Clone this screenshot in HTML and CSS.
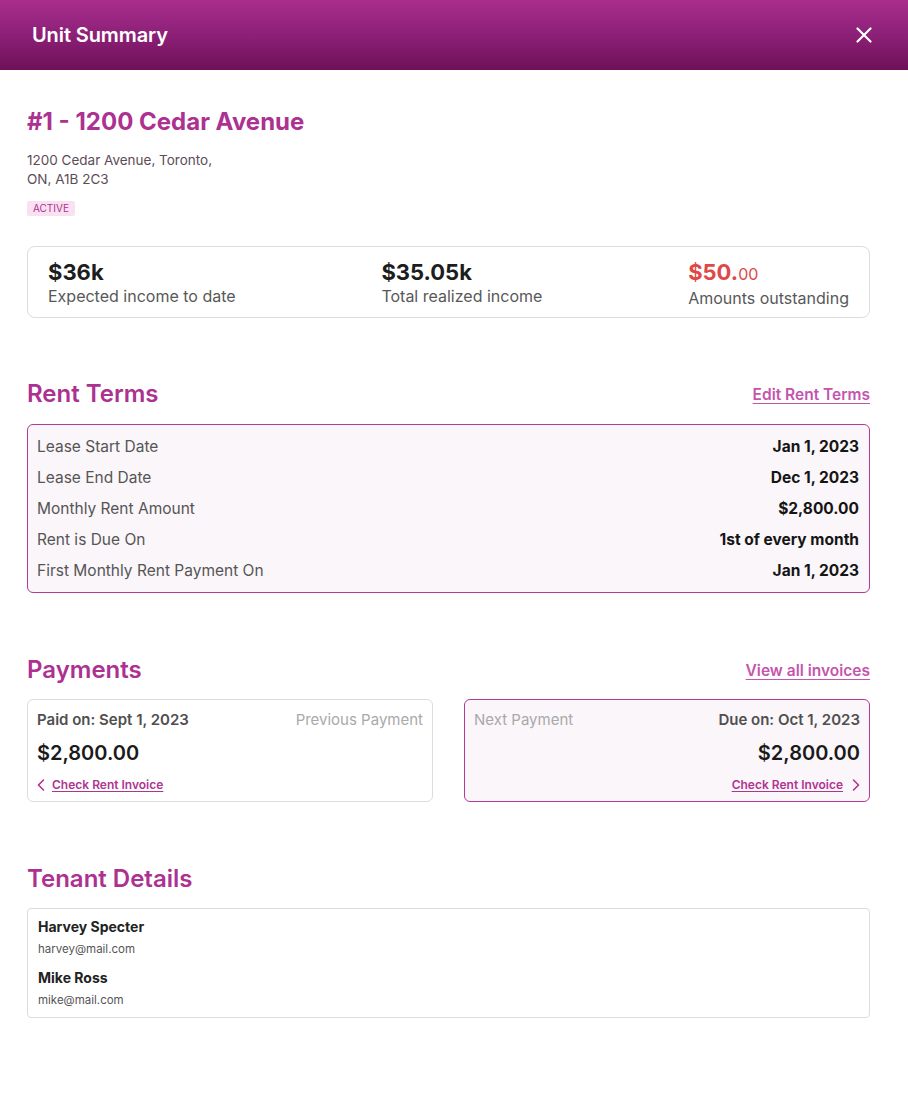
FILE: index.html
```html
<!DOCTYPE html>
<html lang="en">
<head>
<meta charset="utf-8">
<title>Unit Summary</title>
<link rel="stylesheet" href="styles.css">
</head>
<body>
<div class="modal">
  <header class="modal-header">
    <h1 class="modal-title">Unit Summary</h1>
    <button class="close-btn" aria-label="Close">
      <svg width="16" height="16" viewBox="0 0 16 16"><path d="M1.5 1.5 L14.5 14.5 M14.5 1.5 L1.5 14.5" stroke="#fff" stroke-width="2.2" stroke-linecap="round"/></svg>
    </button>
  </header>

  <main class="content">
    <section class="unit-info">
      <h2 class="unit-name">#1 - 1200 Cedar Avenue</h2>
      <p class="address">1200 Cedar Avenue, Toronto,<br>ON, A1B 2C3</p>
      <span class="badge">ACTIVE</span>
    </section>

    <section class="stats">
      <div class="stat">
        <div class="stat-value">$36k</div>
        <div class="stat-label">Expected income to date</div>
      </div>
      <div class="stat">
        <div class="stat-value">$35.05k</div>
        <div class="stat-label">Total realized income</div>
      </div>
      <div class="stat">
        <div class="stat-value red">$50.<span class="cents">00</span></div>
        <div class="stat-label">Amounts outstanding</div>
      </div>
    </section>

    <section class="section rent-section">
      <div class="section-head">
        <h3 class="section-title">Rent Terms</h3>
        <a class="section-link" href="#">Edit Rent Terms</a>
      </div>
      <div class="terms">
        <div class="term"><span class="term-label">Lease Start Date</span><span class="term-value">Jan 1, 2023</span></div>
        <div class="term"><span class="term-label">Lease End Date</span><span class="term-value">Dec 1, 2023</span></div>
        <div class="term"><span class="term-label">Monthly Rent Amount</span><span class="term-value">$2,800.00</span></div>
        <div class="term"><span class="term-label">Rent is Due On</span><span class="term-value">1st of every month</span></div>
        <div class="term"><span class="term-label">First Monthly Rent Payment On</span><span class="term-value">Jan 1, 2023</span></div>
      </div>
    </section>

    <section class="section pay-section">
      <div class="section-head">
        <h3 class="section-title">Payments</h3>
        <a class="section-link" href="#">View all invoices</a>
      </div>
      <div class="pay-grid">
        <div class="pay-card">
          <div class="pay-top">
            <span class="pay-date">Paid on: Sept 1, 2023</span>
            <span class="pay-kind">Previous Payment</span>
          </div>
          <div class="pay-amount">$2,800.00</div>
          <a class="invoice-link" href="#">
            <svg width="8" height="12" viewBox="0 0 8 12"><path d="M6.5 1 L1.5 6 L6.5 11" fill="none" stroke="#b0348f" stroke-width="1.6" stroke-linecap="round" stroke-linejoin="round"/></svg>
            <span>Check Rent Invoice</span>
          </a>
        </div>
        <div class="pay-card next">
          <div class="pay-top">
            <span class="pay-kind">Next Payment</span>
            <span class="pay-date">Due on: Oct 1, 2023</span>
          </div>
          <div class="pay-amount right">$2,800.00</div>
          <a class="invoice-link right" href="#">
            <span>Check Rent Invoice</span>
            <svg width="8" height="12" viewBox="0 0 8 12"><path d="M1.5 1 L6.5 6 L1.5 11" fill="none" stroke="#b0348f" stroke-width="1.6" stroke-linecap="round" stroke-linejoin="round"/></svg>
          </a>
        </div>
      </div>
    </section>

    <section class="section tenant-section">
      <div class="section-head">
        <h3 class="section-title">Tenant Details</h3>
      </div>
      <div class="tenants">
        <div class="tenant">
          <div class="tenant-name">Harvey Specter</div>
          <div class="tenant-email">harvey@mail.com</div>
        </div>
        <div class="tenant">
          <div class="tenant-name">Mike Ross</div>
          <div class="tenant-email">mike@mail.com</div>
        </div>
      </div>
    </section>
  </main>
</div>
</body>
</html>
```

FILE: styles.css
```css
* { box-sizing: border-box; }
html, body { margin: 0; padding: 0; background: #fff; }
body {
  font-family: "Inter", "Noto Sans", "Liberation Sans", sans-serif;
  color: #1c1c1c;
}
.modal { width: 908px; min-height: 1117px; background: #fff; }

.modal-header {
  height: 70px;
  display: flex;
  align-items: center;
  justify-content: space-between;
  padding: 0 36px 0 32px;
  background: linear-gradient(180deg, #a92e8d 0%, #8c2077 50%, #6f1058 100%);
}
.modal-title {
  margin: 0;
  color: #fff;
  font-size: 20px;
  font-weight: 600;
  letter-spacing: -0.1px;
}
.close-btn {
  background: none;
  border: 0;
  padding: 0;
  width: 16px;
  height: 16px;
  display: flex;
  cursor: pointer;
}

.content { padding: 37px 38px 0 27px; }

.unit-name {
  margin: 0;
  font-size: 24px;
  line-height: 30px;
  font-weight: 700;
  color: #ac3190;
}
.address {
  margin: 14px 0 0;
  font-size: 13.5px;
  line-height: 19px;
  color: #5d4c58;
}
.badge {
  display: inline-block;
  margin-top: 12px;
  padding: 1px 6px;
  font-size: 10px;
  line-height: 13px;
  color: #ac3190;
  background: #f9e1f2;
  border-radius: 2px;
}

.stats {
  margin-top: 30px;
  border: 1px solid #dcdcdc;
  border-radius: 8px;
  padding: 11px 20px 9px;
  display: flex;
  justify-content: space-between;
}
.stat-value {
  font-size: 22px;
  line-height: 28px;
  font-weight: 700;
  color: #1d1d1d;
}
.stat-value.red { color: #e04848; }
.stat-value .cents { font-size: 16px; font-weight: 400; }
.stat-label {
  font-size: 16px;
  line-height: 20px;
  color: #585858;
}

.section-head {
  display: flex;
  justify-content: space-between;
  align-items: center;
}
.section-title {
  margin: 0;
  font-size: 24px;
  line-height: 30px;
  font-weight: 600;
  color: #ac3190;
}
.section-link {
  font-size: 15.5px;
  font-weight: 600;
  color: #c455ad;
  text-decoration: underline;
  text-underline-offset: 3px;
}

.rent-section { margin-top: 61px; }
.terms {
  margin-top: 15px;
  border: 1px solid #b43a96;
  border-radius: 6px;
  background: #fbf6fa;
  padding: 6px 10px 6px 9px;
}
.term {
  display: flex;
  justify-content: space-between;
  align-items: center;
  height: 31px;
  font-size: 15.5px;
}
.term-label { color: #555; }
.term-value { font-weight: 700; color: #151515; }

.pay-section { margin-top: 62px; }
.pay-grid {
  margin-top: 14px;
  display: grid;
  grid-template-columns: 1fr 1fr;
  gap: 31px;
}
.pay-card {
  border: 1px solid #dcdcdc;
  border-radius: 6px;
  padding: 10px 9px 10px 9px;
  height: 103px;
}
.pay-card.next {
  border-color: #b43a96;
  background: #fbf6fa;
}
.pay-top {
  display: flex;
  justify-content: space-between;
  font-size: 15px;
  line-height: 20px;
}
.pay-date { font-weight: 600; color: #4f4f4f; }
.pay-kind { color: #a9a9a9; }
.pay-amount {
  margin-top: 11px;
  font-size: 20px;
  line-height: 24px;
  font-weight: 600;
  color: #1a1a1a;
}
.pay-amount.right { text-align: right; }
.invoice-link {
  margin-top: 12px;
  display: flex;
  align-items: center;
  gap: 7px;
  font-size: 12px;
  font-weight: 600;
  color: #b0348f;
  text-decoration: underline;
  text-underline-offset: 2px;
}
.invoice-link.right { justify-content: flex-end; gap: 9px; }
.invoice-link svg { flex: none; }

.tenant-section { margin-top: 62px; }
.tenants {
  margin-top: 14px;
  border: 1px solid #dcdcdc;
  border-radius: 4px;
  padding: 8px 10px 9px;
}
.tenant + .tenant { margin-top: 11px; }
.tenant-name {
  font-size: 14px;
  line-height: 20px;
  font-weight: 700;
  color: #222;
}
.tenant-email {
  margin-top: 4px;
  font-size: 11.5px;
  line-height: 16px;
  color: #555;
}
```
